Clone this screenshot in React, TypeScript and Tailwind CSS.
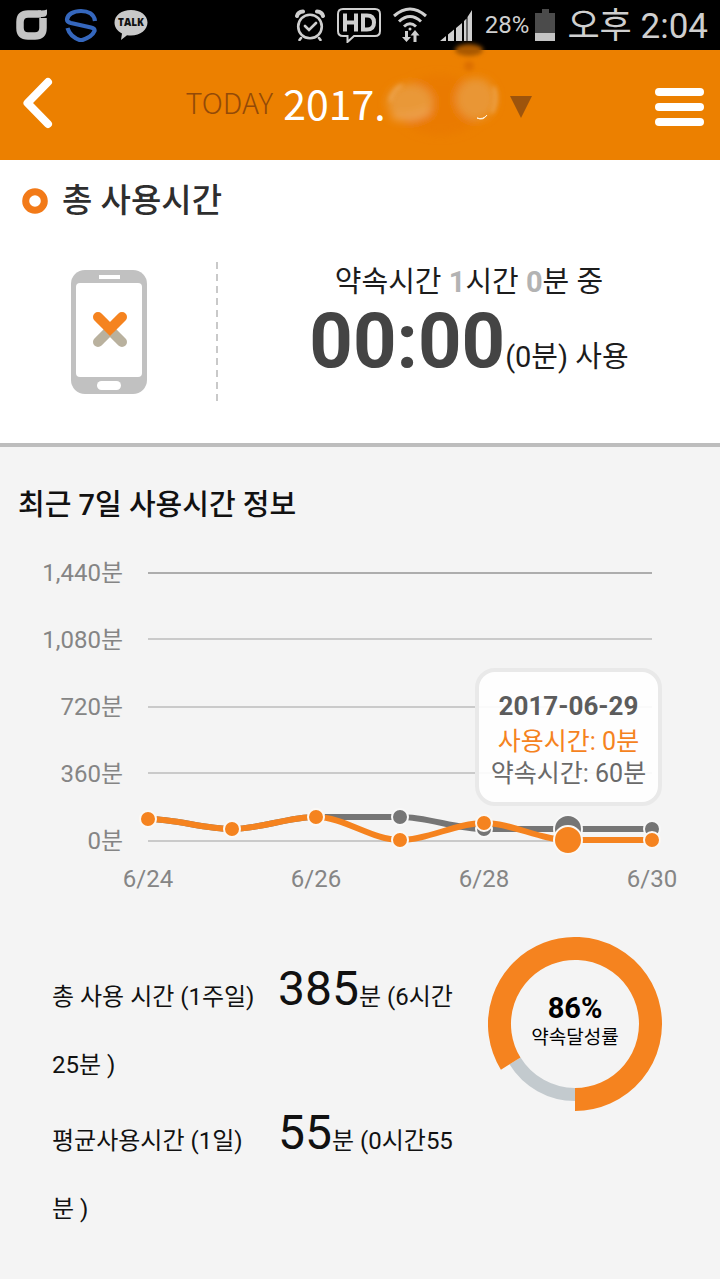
import { useState } from "react";

const yLabels = ["1,440분", "1,080분", "720분", "360분", "0분"];
const xLabels = ["6/24", "6/26", "6/28", "6/30"];
const gridLines = [33, 99, 167, 233, 301];

const days = [
  { x: 0, used: 279, goal: 279 },
  { x: 84, used: 289, goal: 289 },
  { x: 168, used: 277, goal: 277 },
  { x: 252, used: 300, goal: 277 },
  { x: 336, used: 283, goal: 289 },
  { x: 420, used: 300, goal: 289 },
  { x: 504, used: 300, goal: 289 },
];

const stats = [
  { label: "총 사용 시간 (1주일)", total: "385", hours: "6", minutes: "25" },
  { label: "평균사용시간 (1일)", total: "55", hours: "0", minutes: "55" },
];

function StatusBar() {
  return (
    <div className="flex h-[50px] items-center justify-between bg-black pl-4 pr-3 text-[#cfcfcf]">
      <div className="flex items-center gap-4">
        <svg className="h-8 w-8" viewBox="0 0 32 32" fill="none" stroke="#c4c4c4" strokeWidth="7.500">
          <path d="M27 9v10q0 8-8 8h-7q-8 0-8-8v-6q0-8 8-8h13" />
          <path d="M22 1.500h3q4 0 6-1v4q0 3.500-5 3.500h-4z" fill="#c4c4c4" stroke="none" />
        </svg>
        <svg className="h-[34px] w-[34px]" viewBox="0 0 34 34" fill="none" stroke="#3567bd" strokeWidth="4.200">
          <path d="M31 13C30 6 24 3 17 3 9 3 3.500 6.500 3 11.500q0 2.500 4 3.500l20 4.500q4 1 3.500 3.500Q28 29 17 32.500 6 29 3.500 20" />
        </svg>
        <svg className="h-8 w-[34px]" viewBox="0 0 34 32">
          <path
            d="M17 1c9.500 0 16.500 5.400 16.500 12.500S26.500 26.500 17 26.500q-2 0-4-.3L7 31l1-6.500C3.500 22 .5 18.500.5 13.500.5 6.400 7.500 1 17 1z"
            fill="#c9c9c9"
          />
          <text
            x="17"
            y="17"
            textAnchor="middle"
            fill="#111"
            className="font-['Open_Sans',sans-serif] text-[10px] font-extrabold"
          >
            TALK
          </text>
        </svg>
      </div>

      <div className="flex items-center gap-3">
        <svg className="h-8 w-[30px]" viewBox="0 0 30 32" fill="none" stroke="currentColor" strokeWidth="2.600" strokeLinecap="round">
          <circle cx="15" cy="17.500" r="11.800" />
          <path d="M10 17l4 4 7-7M6 29l-1.500 2M24 29l1.500 2" />
          <path d="M2 7q1-4 6-4.500M28 7q-1-4-6-4.500" strokeWidth="4" />
        </svg>
        <svg className="h-9 w-11" viewBox="0 0 44 36" fill="none" stroke="currentColor">
          <path
            d="M6 2h32q5 0 5 5v17q0 5-5 5H17l-6.500 6V29H6q-5 0-5-5V7q0-5 5-5z"
            strokeWidth="2"
          />
          <path d="M8 6.500v18M19 6.500v18M8 15.500h11M26 8.500h4q7 0 7 7t-7 7h-4z" strokeWidth="4" />
        </svg>
        <svg className="h-9 w-[34px]" viewBox="0 0 34 36" fill="none" stroke="currentColor" strokeWidth="3">
          <path d="M1 9q16-14 32 0M6 14.500q11-10 22 0M11 19.500q6-5.500 12 0" />
          <circle cx="17" cy="22" r="1.500" fill="currentColor" stroke="none" />
          <path d="M13.500 24v8M22 35v-8" />
          <path d="M9 30h9l-4.500 5zM17.500 28.500h9L22 23z" fill="currentColor" stroke="none" />
        </svg>
        <svg className="h-8 w-[34px]" viewBox="0 0 34 32" fill="currentColor">
          <path d="M1 32l6-5v5zM9 25.500l6-5V32H9zM17 19l6-5v18h-6zM25 12l2.500-2.500V32H25zM28.500 8L33 1v31h-4.500z" />
        </svg>
        <div className="flex items-center gap-1.5">
          <span className="text-[24px] leading-8">28%</span>
          <svg className="h-8 w-5" viewBox="0 0 20 32">
            <path d="M7 0h7v4h6v28H0V4h7z" fill="#4b4b4b" />
            <path d="M0 24h20v8H0z" fill="#c4c4c4" />
          </svg>
        </div>
        <span className="pt-1 text-[35px] leading-[46px]">오후 2:04</span>
      </div>
    </div>
  );
}

function Header() {
  return (
    <header className="relative flex h-[110px] items-center justify-between bg-[#ec8000] pl-[22px] pr-4 font-['Noto_Sans_CJK_KR',sans-serif]">
      <button type="button" aria-label="뒤로" className="w-10 pb-1">
        <svg className="h-[52px] w-8" viewBox="0 0 32 52" fill="none" stroke="#fff" strokeWidth="8" strokeLinecap="round" strokeLinejoin="round">
          <path d="M26 5L5.500 26 26 47" />
        </svg>
      </button>

      <button type="button" className="flex items-center gap-2.5">
        <span className="pb-1.5 text-[29px] font-light text-[#934a08]">TODAY</span>
        <span className="pb-1.5 text-[41px] leading-[60px] text-white">2017.</span>
        {/* smudged month and day */}
        <svg className="-ml-2.5 h-[60px] w-[114px] overflow-visible" viewBox="0 0 114 60">
          <defs>
            <filter id="smudge" x="-50%" y="-50%" width="200%" height="200%">
              <feGaussianBlur stdDeviation="4" />
            </filter>
            <filter id="smudgeSoft" x="-50%" y="-50%" width="200%" height="200%">
              <feGaussianBlur stdDeviation="2" />
            </filter>
          </defs>
          <g filter="url(#smudge)">
            <ellipse cx="54" cy="30" rx="44" ry="30" fill="#ea7a02" />
            <ellipse cx="24" cy="27" rx="23" ry="18" fill="#e99838" />
            <path d="M6 41q20 5 38-6" stroke="#efa654" strokeWidth="5" fill="none" />
            <ellipse cx="90" cy="24" rx="20" ry="21" fill="#e99635" />
          </g>
          <g filter="url(#smudgeSoft)">
            <path d="M4 26q3-12 12-16" stroke="#efb068" strokeWidth="2" fill="none" />
            <path d="M108 12q4 14-2 26" stroke="#eda550" strokeWidth="3" fill="none" />
            <ellipse cx="83" cy="-25" rx="14" ry="6" fill="#a95800" />
            <ellipse cx="83" cy="-9" rx="5" ry="5" fill="#dd7000" />
          </g>
          <path d="M91 43q6 2 10-3-4 6-10 3z" fill="#fff" stroke="#fff3dc" strokeWidth="1" />
        </svg>
        <svg className="mt-1 h-[22px] w-[22px]" viewBox="0 0 22 22">
          <path d="M0 0h22L11 22z" fill="#9d540c" />
        </svg>
      </button>

      <button type="button" aria-label="메뉴" className="flex w-[49px] flex-col gap-[7px] pt-1">
        <span className="h-2 rounded-full bg-white" />
        <span className="h-2 rounded-full bg-white" />
        <span className="h-2 rounded-full bg-white" />
      </button>
    </header>
  );
}

function TotalUsage() {
  return (
    <section className="h-[287px] border-b-4 border-[#bdbdbd] bg-white">
      <h2 className="flex items-center gap-3.5 pl-[22px] pt-4 text-[33px] font-medium leading-[50px] text-[#2e2e2e]">
        <svg className="h-[26px] w-[26px]" viewBox="0 0 26 26">
          <circle cx="13" cy="13" r="9.300" fill="none" stroke="#f27a18" strokeWidth="7" />
        </svg>
        총 사용시간
      </h2>

      <div className="mt-9 flex">
        <div className="flex w-[218px] shrink-0 justify-center">
          <svg className="mt-2 h-[124px] w-[76px]" viewBox="0 0 76 124">
            <rect width="76" height="124" rx="14" fill="#c1c1c1" />
            <rect x="5" y="13" width="66" height="94" rx="4" fill="#fff" />
            <rect x="28" y="5" width="21" height="4" fill="#fff" />
            <rect x="26" y="111" width="24" height="9" rx="4.500" fill="#fff" />
            <g fill="none" strokeWidth="10" strokeLinecap="round">
              <path d="M27 72l12-12 12 12" stroke="#b9b19e" />
              <path d="M27 47l12 12 12-12" stroke="#f5831f" strokeLinejoin="miter" />
            </g>
          </svg>
        </div>
        <svg className="-ml-0.5 h-[142px] w-0.5 shrink-0" viewBox="0 0 2 142">
          <path d="M1 0v142" stroke="#c9c9c9" strokeWidth="2" strokeDasharray="7 5" />
        </svg>
        <div className="flex-1 text-center text-[29px] text-[#1c1c1c]">
          <p className="pt-0.5 leading-9">
            약속시간 <b className="text-[#b3b3b3]">1</b>시간 <b className="text-[#b3b3b3]">0</b>분 중
          </p>
          <p className="leading-[82px]">
            <strong className="text-[76px] text-[#444]">00:00</strong>(0분) 사용
          </p>
        </div>
      </div>
    </section>
  );
}

// Horizontal tangent at peaks, so the line never overshoots a point
function toCurve(key: "used" | "goal") {
  return days
    .map((d, i) => {
      if (i === 0) return `M${d.x} ${d[key]}`;
      const p = days[i - 1];
      const before = days[i - 2] ?? p;
      const after = days[i + 1] ?? d;
      const peak = (a: number, b: number, c: number) => (b - a) * (c - b) <= 0;
      const s1 = peak(before[key], p[key], d[key]) ? 0 : (d[key] - before[key]) / 6;
      const s2 = peak(p[key], d[key], after[key]) ? 0 : (after[key] - p[key]) / 6;
      return `C${p.x + 28} ${p[key] + s1} ${d.x - 28} ${d[key] - s2} ${d.x} ${d[key]}`;
    })
    .join(" ");
}

function WeekChart() {
  const [selected, setSelected] = useState(5);

  return (
    <div className="flex pr-[68px] text-[24px] text-[#858585]">
      <ul className="w-[123px] shrink-0 text-right leading-[67px]">
        {yLabels.map((label) => (
          <li key={label}>{label}</li>
        ))}
      </ul>

      <div className="relative ml-[25px] flex-1">
        <svg className="block w-full overflow-visible" viewBox="0 0 504 320">
          {gridLines.map((y) => (
            <path key={y} d={`M0 ${y}h504`} stroke={y === 33 ? "#adadad" : "#cacaca"} strokeWidth="2" />
          ))}
          <path d={toCurve("goal")} fill="none" stroke="#757575" strokeWidth="6" />
          {days.map((d, i) => (
            <circle key={d.x} cx={d.x} cy={d.goal} r={i === selected ? 14 : 8} fill="#757575" stroke="#f8f8f8" strokeWidth="2" />
          ))}
          <path d={toCurve("used")} fill="none" stroke="#f5831f" strokeWidth="6" />
          {days.map((d, i) => (
            <circle
              key={d.x}
              cx={d.x}
              cy={d.used}
              r={i === selected ? 14 : 8}
              fill="#f5831f"
              stroke="#fbf8f4"
              strokeWidth="2"
              onClick={() => setSelected(i)}
            />
          ))}
        </svg>

        <div className="-mx-8 flex justify-between pt-px leading-9">
          {xLabels.map((label) => (
            <span key={label} className="w-16 text-center">
              {label}
            </span>
          ))}
        </div>

        {/* TOOLTIP */}
        <div className="absolute -right-2.5 top-[128px] h-[138px] w-[187px] whitespace-nowrap rounded-[20px] border-4 border-[#e9e9e9] bg-white/90 pt-[18px] text-center text-[25px] leading-8 text-[#6a6a6a]">
          <p className="pb-1 text-[26px] font-bold text-[#5c5c5c]">2017-06-29</p>
          <p className="text-[#f5831f]">사용시간: 0분</p>
          <p>약속시간: 60분</p>
        </div>
      </div>
    </div>
  );
}

function Donut() {
  return (
    <div className="relative h-[174px] w-[174px] shrink-0">
      <svg className="h-full w-full" viewBox="-87 -87 174 174" fill="none">
        <path d="M0 70.500A70.500 70.500 0 0 1 -60 36.900" stroke="#c3cace" strokeWidth="13" />
        <path d="M0 75.500A75.500 75.500 0 1 0 -64.300 39.600" stroke="#f5831f" strokeWidth="23" />
      </svg>
      <div className="absolute inset-0 flex flex-col items-center justify-center pb-1 text-black">
        <strong className="text-[29px] leading-8">86%</strong>
        <span className="text-[19px] leading-7">약속달성률</span>
      </div>
    </div>
  );
}

export default function App() {
  return (
    <div className="min-h-screen bg-[#f4f4f4] font-['Roboto','Noto_Sans_CJK_KR',sans-serif]">
      <StatusBar />
      <Header />
      <main>
        <TotalUsage />
        <section>
          <h2 className="pb-2.5 pl-[18px] pt-[34px] text-[29px] font-medium leading-[49px] text-[#111]">
            최근 7일 사용시간 정보
          </h2>
          <WeekChart />

          <div className="flex items-start justify-between pl-[52px] pr-[58px] pt-10">
            <div className="w-[404px] pt-[18px] text-[24px] leading-[68px] text-[#111]">
              {stats.map((s) => (
                <p key={s.label}>
                  <span className="inline-block w-[226px] leading-8">{s.label}</span>
                  <span className="text-[48px]">{s.total}</span>
                  <span>분 (</span>
                  <span>{s.hours}시간</span>
                  <span>{s.minutes}</span>
                  <span>분 )</span>
                </p>
              ))}
            </div>
            <Donut />
          </div>
        </section>
      </main>
    </div>
  );
}
